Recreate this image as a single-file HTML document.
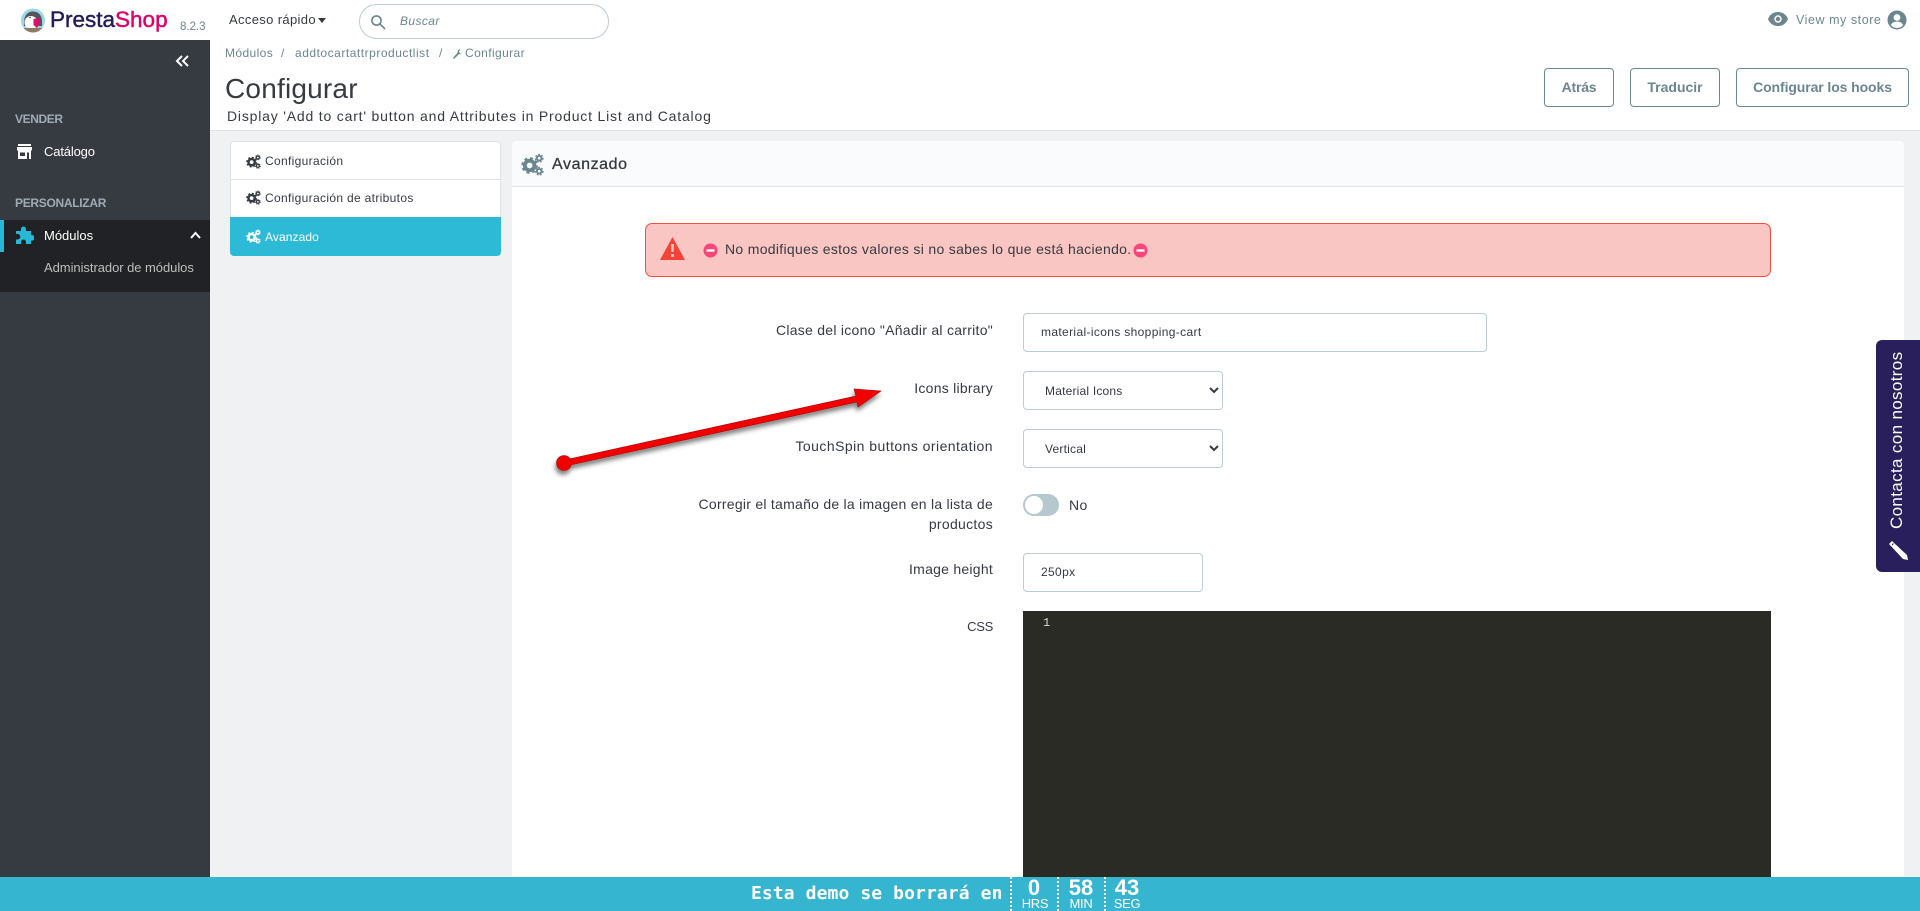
<!DOCTYPE html>
<html lang="es"><head><meta charset="utf-8"><title>Configurar</title>
<style>
*{box-sizing:border-box}
html,body{margin:0;padding:0}
body{width:1920px;height:911px;overflow:hidden;position:relative;background:#eff1f2;font-family:"Liberation Sans",sans-serif;color:#363a41}
.a{position:absolute;white-space:nowrap}
.t{position:absolute;white-space:nowrap;line-height:20px;height:20px}
.r{position:absolute;right:927px;text-align:right;white-space:nowrap;line-height:20px;height:20px;font-size:14px;color:#363a41;letter-spacing:.27px}
.btn{position:absolute;top:68px;height:39px;border:1px solid #6c868e;border-radius:4px;color:#6c868e;font-weight:bold;font-size:14px;line-height:37px;text-align:center;background:#fff}
.inp{position:absolute;background:#fff;border:1px solid #bbcdd2;border-radius:4px;font-size:12px;color:#363a41;line-height:37px;padding-left:17px;letter-spacing:.35px;height:39px}
select{position:absolute;left:1023px;width:200px;height:39px;background:#fff;border:1px solid #bbcdd2;border-radius:4px;font:12px "Liberation Sans",sans-serif;color:#363a41;padding-left:17px;letter-spacing:.2px;margin:0}
.si{position:absolute;left:230px;width:271px;background:#fff;font-size:12px;color:#363a41;border-left:1px solid #dfe3e6;border-right:1px solid #dfe3e6}
.si span{position:absolute;left:34px;white-space:nowrap;line-height:20px;letter-spacing:.33px}
.si svg{position:absolute;left:15px}
.sep{position:absolute;top:877px;width:0;height:34px;border-left:2px dotted #fff}
.n{position:absolute;text-align:center;color:#fff;font-weight:bold;font-size:22px;line-height:22px;top:877px}
.l{position:absolute;text-align:center;color:#fff;font-size:13px;line-height:14px;top:897px;letter-spacing:-.3px}
</style></head><body>
<svg width="0" height="0" style="position:absolute"><defs>
<symbol id="cogs" viewBox="0 0 24 24">
<circle cx="9" cy="13" r="5" fill="none" stroke="currentColor" stroke-width="4"/>
<circle cx="9" cy="13" r="7.6" fill="none" stroke="currentColor" stroke-width="2.2" stroke-dasharray="3 3"/>
<circle cx="19" cy="5.5" r="2.4" fill="none" stroke="currentColor" stroke-width="2"/>
<circle cx="19" cy="5.5" r="4" fill="none" stroke="currentColor" stroke-width="1.2" stroke-dasharray="2 1.5"/>
<circle cx="19" cy="19" r="2.4" fill="none" stroke="currentColor" stroke-width="2"/>
<circle cx="19" cy="19" r="4" fill="none" stroke="currentColor" stroke-width="1.2" stroke-dasharray="2 1.5"/>
</symbol>
<clipPath id="pc"><circle cx="12" cy="12.500" r="12"/></clipPath>
</defs></svg>

<!-- top bar -->
<div class="a" style="left:0;top:0;width:1920px;height:40px;background:#fff"></div>
<svg class="a" style="left:21px;top:8px" width="24" height="25" viewBox="0 0 24 25">
<circle cx="12" cy="12.500" r="12" fill="#9bd7e8"/>
<g clip-path="url(#pc)">
<path d="M3 15C3 7 7 3.500 12 3.500S21 7 21 13v5H3z" fill="#55565a"/>
<ellipse cx="10" cy="14.500" rx="6.500" ry="6.500" fill="#fff"/>
<circle cx="9" cy="9.500" r="1.500" fill="#fff"/><circle cx="9" cy="9.500" r=".7" fill="#222"/>
<path d="M12.500 11l5.500-1 1 5-3 5-3.500-3z" fill="#dd0f70"/>
<path d="M0 20h24v5H0z" fill="#8d7c65"/>
</g>
</svg>
<div class="t" style="left:50px;top:8px;font-size:22.500px;line-height:24px;height:26px;color:#251b5b;-webkit-text-stroke:.45px currentColor">Presta<span style="color:#df0067">Shop</span></div>
<div class="t" style="left:180px;top:17px;font-size:11.500px;color:#6c868e;">8.2.3</div>
<div class="t" style="left:229px;top:10px;font-size:13px;color:#363a41;letter-spacing:.35px">Acceso rápido</div>
<div class="a" style="left:318px;top:18px;width:0;height:0;border:4.500px solid transparent;border-top:5px solid #363a41;border-bottom:0"></div>
<div class="a" style="left:359px;top:4px;width:250px;height:35px;border:1px solid #bbcdd2;border-radius:18px;background:#fff"></div>
<svg class="a" style="left:370px;top:14px" width="16" height="16" viewBox="0 0 16 16" fill="none" stroke="#6c868e" stroke-width="1.6"><circle cx="6.500" cy="6.500" r="4.600"/><path d="M10 10l5 5"/></svg>
<div class="t" style="left:400px;top:11px;font-size:12px;font-style:italic;color:#6c868e;letter-spacing:.4px">Buscar</div>
<svg class="a" style="left:1767px;top:10px" width="22" height="18" viewBox="0 0 22 18"><path d="M11 2C6 2 2.500 5 1 9c1.500 4 5 7 10 7s8.500-3 10-7c-1.500-4-5-7-10-7z" fill="#6c868e"/><circle cx="11" cy="9" r="3.700" fill="#fff"/><circle cx="11" cy="9" r="2.200" fill="#6c868e"/></svg>
<div class="t" style="left:1796px;top:10px;font-size:12.500px;color:#6c868e;letter-spacing:.55px">View my store</div>
<svg class="a" style="left:1887px;top:10px" width="20" height="20" viewBox="0 0 20 20"><circle cx="10" cy="10" r="9.500" fill="#6c868e"/><circle cx="10" cy="7.500" r="3.400" fill="#fff"/><path d="M3.800 15c1.500-2.800 3.700-3.400 6.200-3.400s4.700.6 6.200 3.400c-1.500 1.900-3.700 3-6.200 3s-4.700-1.100-6.200-3z" fill="#fff"/></svg>

<!-- header -->
<div class="a" style="left:210px;top:40px;width:1710px;height:91px;background:#fff;border-bottom:1px solid #dfe3e6"></div>
<div class="t" style="left:225px;top:43px;font-size:12px;color:#6c868e;letter-spacing:.4px">Módulos</div>
<div class="t" style="left:281px;top:43px;font-size:12px;color:#6c868e">/</div>
<div class="t" style="left:295px;top:43px;font-size:12px;color:#6c868e;letter-spacing:.52px">addtocartattrproductlist</div>
<div class="t" style="left:439px;top:43px;font-size:12px;color:#6c868e">/</div>
<svg class="a" style="left:453px;top:49px" width="10" height="10" viewBox="0 0 10 10"><path d="M0 9l1 1 5-5c1.500.5 3 0 3.700-1.500L8 5 6.800 4 6 2.500 7.500.5C6 0 4.500 1 4.700 3.500z" fill="#6c868e"/></svg>
<div class="t" style="left:465px;top:43px;font-size:12px;color:#6c868e;letter-spacing:.4px">Configurar</div>
<div class="a" style="left:225px;top:72px;font-size:28px;line-height:34px;color:#363a41;letter-spacing:.2px">Configurar</div>
<div class="t" style="left:227px;top:106px;font-size:14px;color:#363a41;letter-spacing:.81px">Display 'Add to cart' button and Attributes in Product List and Catalog</div>
<div class="btn" style="left:1544px;width:70px;letter-spacing:-.2px">Atrás</div>
<div class="btn" style="left:1630px;width:90px;">Traducir</div>
<div class="btn" style="left:1736px;width:173px;letter-spacing:-.1px">Configurar los hooks</div>

<!-- sidebar -->
<div class="a" style="left:0;top:40px;width:210px;height:837px;background:#363a41"></div>
<svg class="a" style="left:175px;top:54px" width="15" height="14" viewBox="0 0 15 14" fill="none" stroke="#fff" stroke-width="2"><path d="M7 2L2 7l5 5M13 2L8 7l5 5"/></svg>
<div class="t" style="left:15px;top:109px;font-size:12px;font-weight:bold;color:#a0aab4;letter-spacing:-.4px">VENDER</div>
<svg class="a" style="left:17px;top:144px" width="15" height="15" viewBox="0 0 15 15"><path d="M1 0h13v2H1zM0 3h15v3.500H14V15H1V6.500H0z" fill="#fff"/><path d="M3 8.500h5V12H3zM10 8.500h2V15h-2z" fill="#363a41"/></svg>
<div class="t" style="left:44px;top:142px;font-size:13px;color:#fff;letter-spacing:-.15px">Catálogo</div>
<div class="t" style="left:15px;top:193px;font-size:12px;font-weight:bold;color:#a0aab4;letter-spacing:-.3px">PERSONALIZAR</div>
<div class="a" style="left:0;top:220px;width:210px;height:72px;background:#202226"></div>
<div class="a" style="left:0;top:220px;width:4px;height:32px;background:#25b9d7"></div>
<svg class="a" style="left:15px;top:226px" width="19" height="18" viewBox="0 0 19 18"><path d="M1 5h5V3a2.500 2.500 0 0 1 5 0v2h5v4h1a2.800 2.800 0 0 1 0 5.600h-1V18h-5v-2a2.500 2.500 0 0 0-5 0v2H1v-4.500h1.500a2.800 2.800 0 0 0 0-5.600H1z" fill="#25b9d7"/></svg>
<div class="t" style="left:44px;top:226px;font-size:13px;color:#fff">Módulos</div>
<svg class="a" style="left:190px;top:231px" width="11" height="8" viewBox="0 0 11 8" fill="none" stroke="#fff" stroke-width="2"><path d="M1 7l4.500-5L10 7"/></svg>
<div class="t" style="left:44px;top:258px;font-size:13px;color:#bebebe;letter-spacing:-.05px">Administrador de módulos</div>

<!-- side menu -->
<div class="si" style="top:141px;height:39px;border-top:1px solid #dfe3e6;border-bottom:1px solid #dfe3e6;border-radius:4px 4px 0 0;color:#363a41"><svg style="top:12px" width="15" height="15"><use href="#cogs"/></svg><span style="top:9px">Configuración</span></div>
<div class="si" style="top:180px;height:37px"><svg style="top:10px" width="15" height="15"><use href="#cogs"/></svg><span style="top:8px">Configuración de atributos</span></div>
<div class="si" style="top:217px;height:39px;background:#2dbad6;border-color:#2dbad6;border-radius:0 0 4px 4px;color:#fff"><svg style="top:12px" width="15" height="15"><use href="#cogs"/></svg><span style="top:10px;color:#fff;letter-spacing:.1px">Avanzado</span></div>

<!-- panel -->
<div class="a" style="left:512px;top:141px;width:1392px;height:736px;background:#fff;border-radius:4px 4px 0 0"></div>
<div class="a" style="left:512px;top:141px;width:1392px;height:46px;background:#fafbfc;border-bottom:1px solid #dbe6e9;border-radius:4px 4px 0 0"></div>
<svg class="a" style="left:521px;top:153px;color:#6c868e" width="23" height="23"><use href="#cogs"/></svg>
<div class="t" style="left:552px;top:155px;font-size:16px;color:#363a41;letter-spacing:.6px;-webkit-text-stroke:.3px #363a41">Avanzado</div>

<!-- alert -->
<div class="a" style="left:645px;top:223px;width:1126px;height:54px;background:#f9c6c3;border:1px solid #f54c3e;border-radius:7px"></div>
<svg class="a" style="left:660px;top:237px" width="25" height="23" viewBox="0 0 25 23"><path d="M12.500 0L25 23H0z" fill="#f44336"/><path d="M11 7h3l-.4 8h-2.200zM11 17h3v3h-3z" fill="#f9c6c3"/></svg>
<svg class="a" style="left:703px;top:243px" width="15" height="15" viewBox="0 0 15 15"><circle cx="7.500" cy="7.500" r="7" fill="#f8457a"/><path d="M3.500 6.300h8v2.400h-8z" fill="#fff"/></svg>
<div class="t" style="left:725px;top:239px;font-size:14px;color:#363a41;letter-spacing:.31px">No modifiques estos valores si no sabes lo que está haciendo.</div>
<svg class="a" style="left:1133px;top:243px" width="15" height="15" viewBox="0 0 15 15"><circle cx="7.500" cy="7.500" r="7" fill="#f8457a"/><path d="M3.500 6.300h8v2.400h-8z" fill="#fff"/></svg>

<!-- form -->
<div class="r" style="top:320px">Clase del icono "Añadir al carrito"</div>
<div class="inp" style="left:1023px;top:313px;width:464px">material-icons shopping-cart</div>
<div class="r" style="top:378px;letter-spacing:.25px">Icons library</div>
<select style="top:371px"><option>Material Icons</option></select>
<div class="r" style="top:436px;letter-spacing:.45px">TouchSpin buttons orientation</div>
<select style="top:429px"><option>Vertical</option></select>
<div class="r" style="top:494px;letter-spacing:.26px">Corregir el tamaño de la imagen en la lista de</div>
<div class="r" style="top:514px;letter-spacing:.3px">productos</div>
<div class="a" style="left:1023px;top:494px;width:36px;height:22px;border-radius:11px;background:#b5c8cd"></div>
<div class="a" style="left:1025px;top:496px;width:18px;height:18px;border-radius:50%;background:#fff"></div>
<div class="t" style="left:1069px;top:495px;font-size:14px;color:#363a41;letter-spacing:.4px">No</div>
<div class="r" style="top:559px;letter-spacing:.25px">Image height</div>
<div class="inp" style="left:1023px;top:553px;width:180px">250px</div>
<div class="r" style="top:617px;font-size:13px;letter-spacing:-.3px">CSS</div>
<div class="a" style="left:1023px;top:611px;width:748px;height:266px;background:#2a2b24"></div>
<div class="t" style="left:1043px;top:613px;font:12px/20px 'Liberation Mono',monospace;color:#d8d8d0">1</div>

<!-- arrow -->
<svg class="a" style="left:550px;top:380px;overflow:visible" width="340" height="100" viewBox="0 0 340 100">
<defs><filter id="s" x="-10%" y="-30%" width="120%" height="170%"><feDropShadow dx="-1" dy="4" stdDeviation="2.500" flood-color="#000" flood-opacity=".5"/></filter></defs>
<g filter="url(#s)"><path d="M19 79L306 16 304 9 331 11 308 27 307 22 20 85z" fill="#f20000" stroke="#a80000" stroke-width=".6"/>
<circle cx="14" cy="83" r="7.500" fill="#f20000" stroke="#a80000" stroke-width=".6"/></g>
</svg>

<!-- contact tab -->
<div class="a" style="left:1876px;top:340px;width:44px;height:232px;background:#291f5d;border-radius:6px 0 0 6px"></div>
<div class="a" style="left:1897px;top:529px;width:180px;height:20px;line-height:20px;transform-origin:0 0;transform:rotate(-90deg) translate(0,-10px);font-size:17px;color:#fff;letter-spacing:.35px;text-align:left">Contacta con nosotros</div>
<svg class="a" style="left:1888px;top:540px" width="20" height="20" viewBox="0 0 20 20"><path d="M1 4L4 1l15 14 1 5-5-1z" fill="#fff"/><path d="M4 5L5.500 3.500" stroke="#291f5d"/></svg>

<!-- bottom bar -->
<div class="a" style="left:0;top:877px;width:1920px;height:34px;background:#36b5d1"></div>
<div class="t" style="left:751px;top:882px;font:bold 18px/24px 'DejaVu Sans Mono','Liberation Mono',monospace;height:24px;color:#fff;letter-spacing:.1px">Esta demo se borrará en</div>
<div class="sep" style="left:1010px"></div><div class="sep" style="left:1057px"></div><div class="sep" style="left:1104px"></div>
<div class="n" style="left:1012px;width:44px">0</div><div class="l" style="left:1012px;width:46px">HRS</div>
<div class="n" style="left:1059px;width:44px">58</div><div class="l" style="left:1059px;width:44px">MIN</div>
<div class="n" style="left:1106px;width:42px">43</div><div class="l" style="left:1106px;width:42px">SEG</div>
</body></html>
